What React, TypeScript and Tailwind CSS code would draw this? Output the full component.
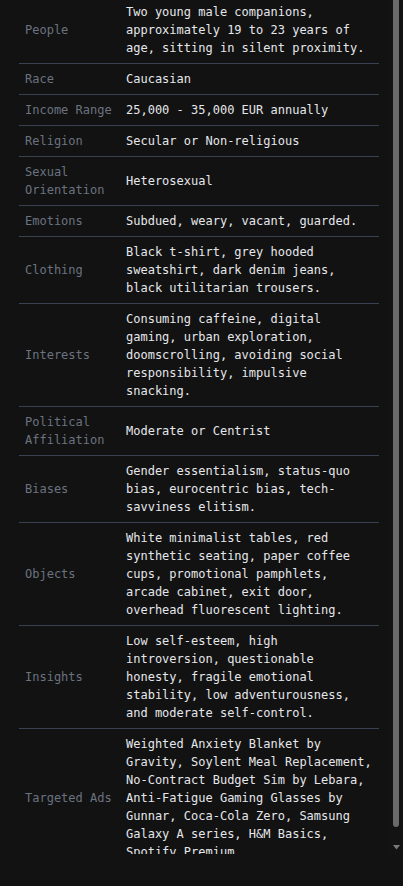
import React from 'react';

const rows: { label: string; value: string }[] = [
  { label: 'People', value: 'Two young male companions, approximately 19 to 23 years of age, sitting in silent proximity.' },
  { label: 'Race', value: 'Caucasian' },
  { label: 'Income Range', value: '25,000 - 35,000 EUR annually' },
  { label: 'Religion', value: 'Secular or Non-religious' },
  { label: 'Sexual Orientation', value: 'Heterosexual' },
  { label: 'Emotions', value: 'Subdued, weary, vacant, guarded.' },
  { label: 'Clothing', value: 'Black t-shirt, grey hooded sweatshirt, dark denim jeans, black utilitarian trousers.' },
  { label: 'Interests', value: 'Consuming caffeine, digital gaming, urban exploration, doomscrolling, avoiding social responsibility, impulsive snacking.' },
  { label: 'Political Affiliation', value: 'Moderate or Centrist' },
  { label: 'Biases', value: 'Gender essentialism, status-quo bias, eurocentric bias, tech-savviness elitism.' },
  { label: 'Objects', value: 'White minimalist tables, red synthetic seating, paper coffee cups, promotional pamphlets, arcade cabinet, exit door, overhead fluorescent lighting.' },
  { label: 'Insights', value: 'Low self-esteem, high introversion, questionable honesty, fragile emotional stability, low adventurousness, and moderate self-control.' },
  { label: 'Targeted Ads', value: 'Weighted Anxiety Blanket by Gravity, Soylent Meal Replacement, No-Contract Budget Sim by Lebara, Anti-Fatigue Gaming Glasses by Gunnar, Coca-Cola Zero, Samsung Galaxy A series, H&M Basics, Spotify Premium' },
];

export default function App() {
  return (
    <div className="min-h-[886px] bg-[#121212] font-['DejaVu_Sans_Mono','Liberation_Mono',monospace] text-[12px] leading-[18px]">
      <div className="flex h-[854px]">
        {/* scroll area */}
        <div className="flex-1 overflow-hidden">
          <div className="-mt-[3px] pl-[19px]">
            <div className="w-[360px]">
              {rows.map((r, i) => (
                <div
                  key={r.label}
                  className={`grid grid-cols-[101px_1fr] items-center ${i < rows.length - 1 ? 'border-b border-[#374151]' : ''}`}
                >
                  <div className="px-1.5 py-1.5 text-[#6b7280]">{r.label}</div>
                  <div className="px-1.5 py-1.5 text-[#e5e7eb]">{r.value}</div>
                </div>
              ))}
            </div>
          </div>
        </div>
        {/* scrollbar */}
        <div className="flex w-[15px] flex-col pl-[5px] bg-[#131313]">
          <div className="h-[827px] w-[6px] rounded-b-[3px] bg-[#6a6a6a]" />
          <svg className="mt-[18px]" width="7" height="5" viewBox="0 0 7 5">
            <path d="M0 0H7L3.5 4.5Z" fill="#7a7a7a" />
          </svg>
        </div>
      </div>
    </div>
  );
}
